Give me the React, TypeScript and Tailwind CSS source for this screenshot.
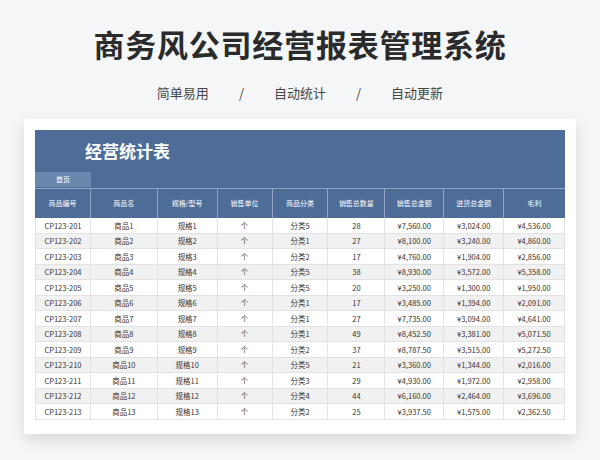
import React from 'react';

const cols = [56, 67, 60, 55, 56, 57, 59, 60, 61];
const heads = ['商品编号', '商品名', '规格/型号', '销售单位', '商品分类', '销售总数量', '销售总金额', '进货总金额', '毛利'];
const cats = [5, 1, 2, 5, 5, 1, 1, 1, 2, 5, 3, 4, 2];
const qty = [28, 27, 17, 38, 20, 17, 27, 49, 37, 21, 29, 44, 25];
const sales = [7560, 8100, 4760, 8930, 3250, 3485, 7735, 8452.5, 8787.5, 3360, 4930, 6160, 3937.5];
const cost = [3024, 3240, 1904, 3572, 1300, 1394, 3094, 3381, 3515, 1344, 1972, 2464, 1575];

const fmt = (n: number) => '¥' + n.toLocaleString('en-US', { minimumFractionDigits: 2, maximumFractionDigits: 2 });

export default function App() {
  const rows = cats.map((c, i) => [
    `CP123-${201 + i}`, `商品${i + 1}`, `规格${i + 1}`, '个', `分类${c}`, String(qty[i]),
    fmt(sales[i]), fmt(cost[i]), fmt(sales[i] - cost[i]),
  ]);
  return (
    <div className="w-[600px] h-[460px] bg-[#f4f6f8] overflow-hidden" style={{ fontFamily: '"Noto Sans CJK SC", "Noto Sans", sans-serif' }}>
      <h1 className="text-center text-[31px] font-bold text-[#2b2b2b] pt-[22px] leading-[44px] tracking-wide">商务风公司经营报表管理系统</h1>
      <div className="flex justify-center gap-[30px] text-[13px] text-[#444] mt-[18px] leading-[18px]">
        <span>简单易用</span><span>/</span><span>自动统计</span><span>/</span><span>自动更新</span>
      </div>
      <div className="mx-[24px] mt-[17px] bg-white p-[11px] pb-[14px] shadow-[0_6px_14px_rgba(0,0,0,0.12)]">
        <div className="bg-[#4d6c98]">
          <div className="h-[42px] flex items-center pl-[50px] text-white text-[17px] font-bold">经营统计表</div>
          <div className="w-[56px] h-[15px] bg-[#6a87ae] text-white text-[7px] flex items-center justify-center">首页</div>
          <div className="flex mt-[1px] border-t border-[#8ea5c4]">
            {heads.map((h, i) => (
              <div key={i} style={{ width: cols[i] }} className="h-[29px] flex items-center justify-center text-white text-[7px] border-r border-[#8ea5c4] last:border-r-0">{h}</div>
            ))}
          </div>
        </div>
        {rows.map((r, ri) => (
          <div key={ri} className={`flex border-b border-[#e2e2e2] ${ri % 2 ? 'bg-[#f1f1f1]' : 'bg-white'}`}>
            {r.map((v, ci) => (
              <div key={ci} style={{ width: cols[ci] }} className="h-[14.5px] flex items-center justify-center text-[7.5px] text-[#333] border-r border-[#e2e2e2] first:border-l">{v}</div>
            ))}
          </div>
        ))}
      </div>
    </div>
  );
}
